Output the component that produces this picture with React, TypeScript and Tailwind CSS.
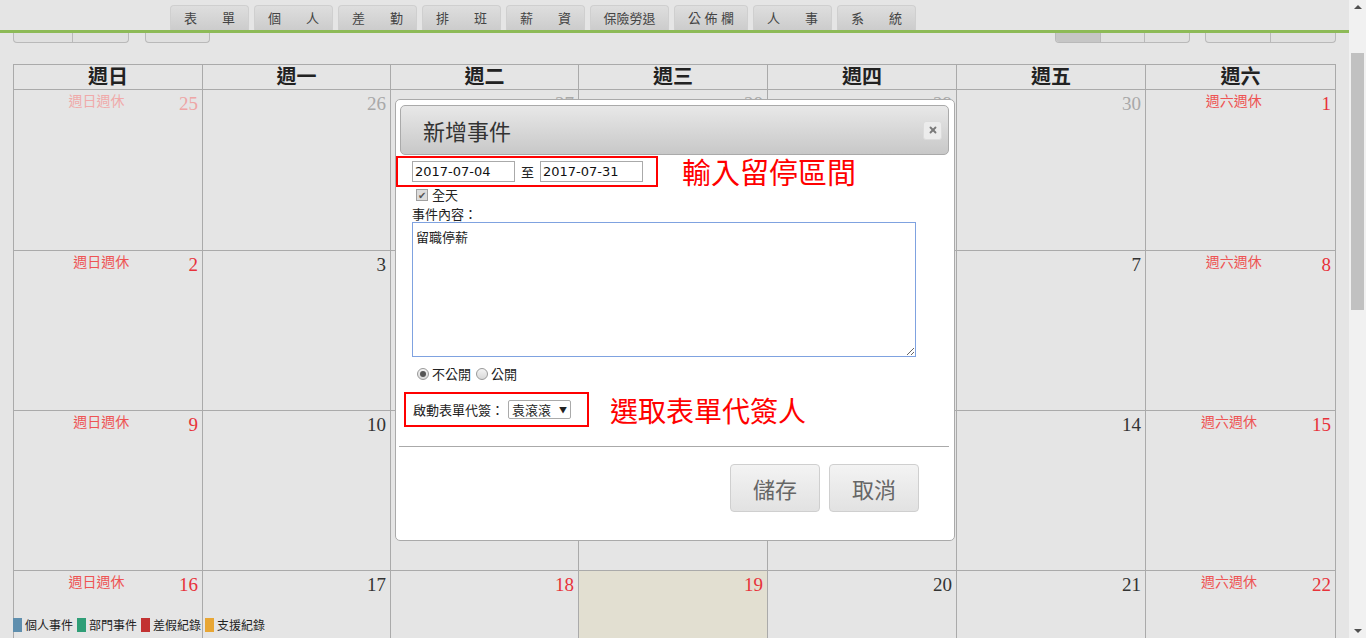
import React from "react";
import { X } from "lucide-react";

type Tone = "grey" | "faded" | "red" | "dark";

interface DayCell {
  d: string;
  tone: Tone;
  label?: string;
  today?: boolean;
}

const cjk = "font-['Noto_Sans_CJK_TC','Noto_Sans',sans-serif]";
const serif = "font-['Liberation_Serif','Noto_Sans_CJK_TC',serif]";

const tabs = [
  { text: ["表", "單"], w: "w-[79px]" },
  { text: ["個", "人"], w: "w-[79px]" },
  { text: ["差", "勤"], w: "w-[79px]" },
  { text: ["排", "班"], w: "w-[79px]" },
  { text: ["薪", "資"], w: "w-[79px]" },
  { text: ["保險勞退"], w: "w-[79px]" },
  { text: ["公", "佈", "欄"], w: "w-[74px]" },
  { text: ["人", "事"], w: "w-[79px]" },
  { text: ["系", "統"], w: "w-[79px]" },
];

const weekdays = ["週日", "週一", "週二", "週三", "週四", "週五", "週六"];

const sun = "週日週休";
const sat = "週六週休";

const rows: DayCell[][] = [
  [
    { d: "25", tone: "faded", label: sun },
    { d: "26", tone: "grey" },
    { d: "27", tone: "grey" },
    { d: "28", tone: "grey" },
    { d: "29", tone: "grey" },
    { d: "30", tone: "grey" },
    { d: "1", tone: "red", label: sat },
  ],
  [
    { d: "2", tone: "red", label: sun },
    { d: "3", tone: "dark" },
    { d: "4", tone: "dark" },
    { d: "5", tone: "dark" },
    { d: "6", tone: "dark" },
    { d: "7", tone: "dark" },
    { d: "8", tone: "red", label: sat },
  ],
  [
    { d: "9", tone: "red", label: sun },
    { d: "10", tone: "dark" },
    { d: "11", tone: "dark" },
    { d: "12", tone: "dark" },
    { d: "13", tone: "dark" },
    { d: "14", tone: "dark" },
    { d: "15", tone: "red", label: sat },
  ],
  [
    { d: "16", tone: "red", label: sun },
    { d: "17", tone: "dark" },
    { d: "18", tone: "red" },
    { d: "19", tone: "red", today: true },
    { d: "20", tone: "dark" },
    { d: "21", tone: "dark" },
    { d: "22", tone: "red", label: sat },
  ],
];

const rowHeights = ["h-[161px]", "h-[160px]", "h-[160px]", "h-[160px]"];

const numTone: Record<Tone, string> = {
  grey: "text-[#a8a8a8]",
  faded: "text-[#eea6a6]",
  red: "text-[#e8323a]",
  dark: "text-[#333]",
};

const labelTone: Record<Tone, string> = {
  grey: "text-[#a8a8a8]",
  faded: "text-[#f0aaaa]",
  red: "text-[#ee5454]",
  dark: "text-[#333]",
};

const legend = [
  { c: "bg-[#5f8fae]", t: "個人事件" },
  { c: "bg-[#2f9e77]", t: "部門事件" },
  { c: "bg-[#c23232]", t: "差假紀錄" },
  { c: "bg-[#e8a634]", t: "支援紀錄" },
];

function Radio({ checked, label }: { checked?: boolean; label: string }) {
  return (
    <span className="flex items-center gap-[3px]">
      <span className="w-[12px] h-[12px] rounded-full border border-[#999] bg-gradient-to-b from-[#f4f4f4] to-[#d8d8d8] flex items-center justify-center">
        {checked && <span className="w-[6px] h-[6px] rounded-full bg-[#555]" />}
      </span>
      <span>{label}</span>
    </span>
  );
}

export default function App() {
  return (
    <div className="flex w-[1366px] h-[638px] overflow-hidden bg-[#e5e5e5]">
      {/* page */}
      <div className="relative w-[1349px] h-[638px] overflow-hidden">
        {/* top menu tabs */}
        <div className={`flex gap-[5px] pl-[170px] pt-[5px] ${cjk}`}>
          {tabs.map((t, i) => (
            <div
              key={i}
              className={`${t.w} h-[25px] flex items-center ${
                t.text.length > 1 ? "justify-between" : "justify-center"
              } px-[13px] whitespace-nowrap rounded-t-[4px] border border-b-0 border-[#cfcfcf] bg-gradient-to-b from-[#dedede] to-[#cccccc] text-[13px] text-[#444]`}
            >
              {t.text.map((c, j) => (
                <span key={j}>{c}</span>
              ))}
            </div>
          ))}
        </div>
        <div className="h-[3px] bg-[#8dba57]" />

        {/* toolbar buttons, mostly hidden under the menu */}
        <div className="flex h-[10px]">
          <div className="ml-[13px] w-[116px] flex border border-t-0 border-[#b9b9b9] rounded-b-[4px] bg-[#e0e0e0]">
            <div className="w-[59px] border-r border-[#b9b9b9]" />
          </div>
          <div className="ml-[16px] w-[65px] border border-t-0 border-[#b9b9b9] rounded-b-[4px] bg-[#e0e0e0]" />
          <div className="ml-[845px] w-[135px] flex border border-t-0 border-[#b9b9b9] rounded-b-[4px] bg-[#e0e0e0] overflow-hidden">
            <div className="w-[45px] bg-[#c6c6c6] border-r border-[#b9b9b9]" />
            <div className="w-[44px] border-r border-[#b9b9b9]" />
          </div>
          <div className="ml-[15px] w-[131px] flex border border-t-0 border-[#b9b9b9] rounded-b-[4px] bg-[#e0e0e0]">
            <div className="w-[65px] border-r border-[#b9b9b9]" />
          </div>
        </div>

        {/* calendar */}
        <div className="mt-[21px] ml-[13px] w-[1323px] grid grid-cols-[189px_188px_188px_189px_189px_189px_190px] border-l border-t border-[#aaa]">
          {weekdays.map((w) => (
            <div
              key={w}
              className={`h-[25px] flex items-center justify-center border-r border-b border-[#aaa] text-[20px] font-bold text-[#222] leading-none ${serif}`}
            >
              {w}
            </div>
          ))}
          {rows.map((row, ri) =>
            row.map((c) => (
              <div
                key={c.d + ri}
                className={`${rowHeights[ri]} border-r border-b border-[#aaa] flex items-start pt-[2px] pr-[4px] ${
                  c.today ? "bg-[#e2dfd1]" : ""
                }`}
              >
                <div className={`flex-1 text-center text-[14px] leading-[16px] ${cjk} ${labelTone[c.tone]}`}>
                  {c.label ?? ""}
                </div>
                <div className={`pt-[2px] text-[19px] leading-none ${serif} ${numTone[c.tone]}`}>{c.d}</div>
              </div>
            ))
          )}
        </div>

        {/* legend */}
        <div className={`absolute left-[13px] bottom-[6px] flex items-center gap-[4px] text-[12px] text-[#222] ${cjk}`}>
          {legend.map((l) => (
            <div key={l.t} className="flex items-center gap-[3px]">
              <span className={`w-[9px] h-[14px] ${l.c}`} />
              <span className="leading-[14px]">{l.t}</span>
            </div>
          ))}
        </div>

        {/* dialog */}
        <div
          className={`absolute left-[395px] top-[99px] w-[560px] h-[442px] bg-white border border-[#aaa] rounded-[5px] text-[13px] text-[#222] ${cjk}`}
        >
          {/* header */}
          <div className="ml-[4px] mt-[5px] w-[549px] h-[50px] flex items-center justify-between pl-[22px] pr-[6px] rounded-[5px] border border-[#aaa] bg-gradient-to-b from-[#e8e8e8] to-[#c8c8c8]">
            <span className="text-[22px] text-[#333] leading-none">新增事件</span>
            <button className="w-[19px] h-[19px] flex items-center justify-center rounded-[3px] border border-[#dcdcdc] bg-[#ececec]">
              <X size={10} strokeWidth={4.5} className="text-[#7a7a7a]" />
            </button>
          </div>

          {/* date range */}
          <div className="mt-[1px] flex items-center">
            <div className="w-[262px] h-[31px] border-2 border-[#ff0000] flex items-center pl-[14px]">
              <input
                readOnly
                value="2017-07-04"
                className="w-[103px] h-[21px] border border-[#aaa] px-[2px] text-[13px] text-[#111] font-['DejaVu_Sans',sans-serif] outline-none"
              />
              <span className="mx-[6px]">至</span>
              <input
                readOnly
                value="2017-07-31"
                className="w-[103px] h-[21px] border border-[#aaa] px-[2px] text-[13px] text-[#111] font-['DejaVu_Sans',sans-serif] outline-none"
              />
            </div>
            <span className="ml-[24px] text-[29px] leading-none text-[#ff0000]">輸入留停區間</span>
          </div>

          {/* all day */}
          <div className="mt-[1px] ml-[20px] h-[14px] flex items-center gap-[4px]">
            <span className="w-[12px] h-[12px] border border-[#a0a0a0] bg-[#dcdcdc] flex items-center justify-center text-[10px] leading-none text-[#555]">
              ✔
            </span>
            <span>全天</span>
          </div>

          <div className="mt-[4px] ml-[16px] h-[16px] leading-[16px]">事件內容：</div>

          <textarea
            readOnly
            value="留職停薪"
            className="block ml-[16px] w-[504px] h-[135px] border border-[#7fa2e0] px-[3px] py-[4px] text-[13px] text-[#222] resize-y outline-none"
          />

          {/* visibility */}
          <div className="mt-[9px] ml-[21px] h-[16px] flex items-center gap-[5px]">
            <Radio checked label="不公開" />
            <Radio label="公開" />
          </div>

          {/* substitute signer */}
          <div className="mt-[10px] ml-[8px] flex items-center">
            <div className="w-[185px] h-[35px] border-2 border-[#ff0000] flex items-center pl-[7px]">
              <span>啟動表單代簽：</span>
              <div className="ml-[4px] w-[63px] h-[19px] border border-[#aaa] rounded-[2px] flex items-center justify-between px-[3px]">
                <span>袁滾滾</span>
                <span className="text-[8px] text-[#222]">▼</span>
              </div>
            </div>
            <span className="ml-[21px] text-[28px] leading-none text-[#ff0000]">選取表單代簽人</span>
          </div>

          <div className="mt-[19px] ml-[3px] w-[550px] h-px bg-[#aaa]" />

          {/* actions */}
          <div className="mt-[17px] flex justify-end gap-[9px] pr-[35px]">
            <button className="w-[90px] h-[48px] rounded-[4px] border border-[#cfcfcf] bg-gradient-to-b from-[#f3f3f3] to-[#e2e2e2] text-[22px] text-[#666]">
              儲存
            </button>
            <button className="w-[90px] h-[48px] rounded-[4px] border border-[#cfcfcf] bg-gradient-to-b from-[#f3f3f3] to-[#e2e2e2] text-[22px] text-[#666]">
              取消
            </button>
          </div>
        </div>
      </div>

      {/* scrollbar */}
      <div className="w-[17px] h-[638px] bg-[#f1f1f1] flex flex-col items-center">
        <div className="h-[14px] flex items-center">
          <span className="w-0 h-0 border-l-[4px] border-r-[4px] border-b-[4px] border-l-transparent border-r-transparent border-b-[#505050]" />
        </div>
        <div className="mt-[39px] w-[13px] h-[257px] bg-[#c1c1c1]" />
        <div className="flex-1" />
        <div className="h-[14px] flex items-center">
          <span className="w-0 h-0 border-l-[4px] border-r-[4px] border-t-[4px] border-l-transparent border-r-transparent border-t-[#505050]" />
        </div>
      </div>
    </div>
  );
}
